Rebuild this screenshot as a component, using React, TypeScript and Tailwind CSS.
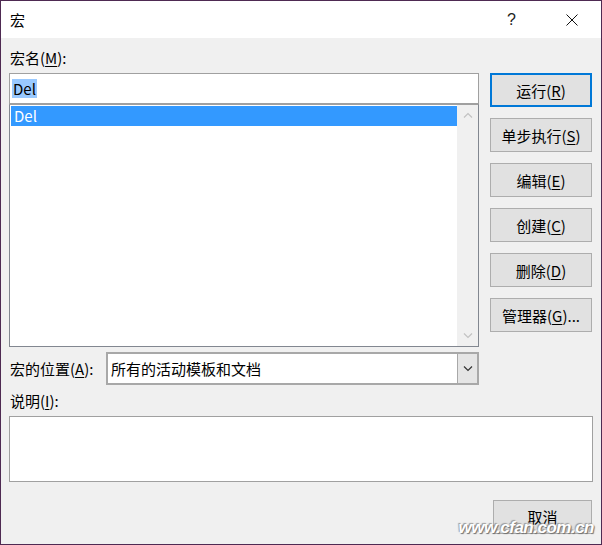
import React from "react";

const font = { fontFamily: "'Noto Sans CJK SC', 'Microsoft YaHei', sans-serif" };

function U({ c }: { c: string }) {
  return <span className="underline underline-offset-2 decoration-1">{c}</span>;
}

function Btn({ children, primary }: { children: React.ReactNode; primary?: boolean }) {
  return (
    <div
      className={
        "w-[102px] h-[34px] flex items-center justify-center bg-[#e1e1e1] text-[15px] text-black leading-none " +
        (primary ? "border-2 border-[#0078d7]" : "border border-[#adadad]")
      }
    >
      {children}
    </div>
  );
}

function Chevron({ up, color }: { up?: boolean; color: string }) {
  return (
    <svg width="10" height="6" viewBox="0 0 10 6" fill="none">
      <path d={up ? "M1 5.5L5 1.5L9 5.5" : "M1 0.5L5 4.5L9 0.5"} stroke={color} strokeWidth="1.2" />
    </svg>
  );
}

export default function App() {
  return (
    <div
      style={font}
      className="relative w-[602px] h-[545px] border border-[#4e2a52] bg-[#f0f0f0] flex flex-col text-black overflow-hidden"
    >
      {/* title bar */}
      <div className="h-[37px] bg-white flex items-center shrink-0">
        <span className="ml-[9px] text-[15px] leading-none">宏</span>
        <div className="flex-1" />
        <span className="text-[16px] leading-none text-[#222] mr-[50px]" style={{ fontFamily: "'Liberation Sans', sans-serif" }}>?</span>
        <svg width="12" height="12" viewBox="0 0 12 12" className="mr-[23px]">
          <path d="M0.5 0.5L11.5 11.5M11.5 0.5L0.5 11.5" stroke="#111" strokeWidth="1" />
        </svg>
      </div>

      <div className="pl-[8px] pr-[8px] flex flex-col">
        <div className="flex">
          {/* left column */}
          <div className="w-[470px] flex flex-col shrink-0">
            <div className="h-[35px] flex items-end pb-[8px] pl-[1px] text-[15px] leading-none">
              宏名(<U c="M" />):
            </div>
            <div className="h-[31px] bg-white border border-[#a0a0a0] flex items-center pl-[2px] pb-[1px]">
              <span className="bg-[#99c9ff] text-[15px] leading-[19px] px-[1px]">Del</span>
            </div>
            <div className="h-[243px] bg-white border border-[#828790] border-t-[#a0a0a0] flex">
              <div className="flex-1 pt-[1px] pl-[1px]">
                <div className="h-[20px] bg-[#3399ff] text-white text-[15px] leading-[20px] pl-[3px]">Del</div>
              </div>
              <div className="w-[21px] bg-[#f0f0f0] flex flex-col items-center justify-between py-[7px]">
                <Chevron up color="#c2c2c2" />
                <Chevron color="#c2c2c2" />
              </div>
            </div>
          </div>
          {/* right buttons */}
          <div className="ml-[11px] mt-[35px] flex flex-col gap-[11px] shrink-0">
            <Btn primary>
              运行(<U c="R" />)
            </Btn>
            <Btn>
              单步执行(<U c="S" />)
            </Btn>
            <Btn>
              编辑(<U c="E" />)
            </Btn>
            <Btn>
              创建(<U c="C" />)
            </Btn>
            <Btn>
              删除(<U c="D" />)
            </Btn>
            <Btn>
              管理器(<U c="G" />)...
            </Btn>
          </div>
        </div>

        {/* location row */}
        <div className="mt-[5px] flex items-center w-[470px]">
          <span className="w-[97px] pl-[1px] text-[15px] leading-none">
            宏的位置(<U c="A" />):
          </span>
          <div className="flex-1 h-[33px] bg-white border-2 border-[#a8a8a8] flex items-stretch">
            <span className="flex-1 flex items-center pl-[3px] text-[15px] leading-none">所有的活动模板和文档</span>
            <div className="w-[20px] bg-[#e5e5e5] border-l border-[#a8a8a8] flex items-center justify-center">
              <Chevron color="#333" />
            </div>
          </div>
        </div>

        <div className="h-[31px] flex items-end pb-[8px] pl-[1px] text-[15px] leading-none">
          说明(<U c="I" />):
        </div>
        <div className="w-[584px] h-[66px] bg-white border border-[#a0a0a0]" />

        <div className="mt-[18px] flex justify-end pr-[1px]">
          <div className="w-[99px] h-[34px] bg-[#e1e1e1] border border-[#adadad] flex items-center justify-center text-[15px] leading-none pb-[1px]">
            取消
          </div>
        </div>
      </div>

      {/* watermark */}
      <div
        className="absolute right-[7px] bottom-[8px] text-[17px] font-bold italic text-white leading-none tracking-[-0.5px]"
        style={{ fontFamily: "'Liberation Sans', sans-serif", textShadow: "1px 1px 1px #6f6f6f, -1px -1px 1px #9a9a9a" }}
      >
        www.cfan.com.cn
      </div>
    </div>
  );
}
